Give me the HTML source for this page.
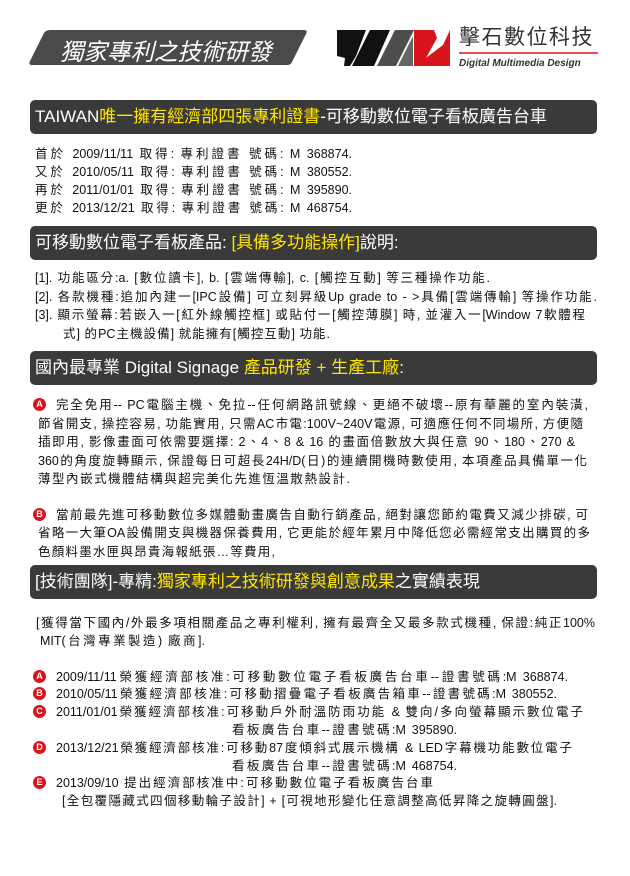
<!DOCTYPE html>
<html><head><meta charset="utf-8"><style>
body{margin:0;width:630px;height:876px;background:#fff;position:relative;overflow:hidden;font-family:"Liberation Sans","Noto Sans CJK TC",sans-serif;color:#111}
.a{position:absolute;white-space:nowrap}
.t{font-size:12.5px;line-height:14px;text-align:justify;text-align-last:justify;text-justify:inter-character;white-space:nowrap}
.bar{position:absolute;left:30px;width:567px;height:34px;background:#3a3a3a;border-radius:5px;color:#fff;font-size:17px;line-height:34px;padding-left:5px;box-sizing:border-box;white-space:nowrap}
.y{color:#ffe600}
.c{position:absolute;width:13px;height:13px;border-radius:50%;background:#d8141c;color:#fff;font-size:9px;line-height:13px;text-align:center;font-weight:bold}
</style></head><body>
<svg class="a" style="left:0;top:0" width="630" height="80">
<path d="M50,30 L304,30 Q308,30 306,34 L292,62 Q291,65 287,65 L32,65 Q28,65 30,61 L44,33 Q46,30 50,30Z" fill="#4a4a4a"/>
<polygon points="337,30 366,30 356,56 350,66 344,66 345,58 337,56" fill="#111"/>
<polygon points="370,30 390,30 374,66 352,66" fill="#111"/>
<polygon points="395,30 414,30 396,66 377,66" fill="#4d4d4d"/>
<polygon points="398,66 413,36 413,66" fill="#666"/>
<polygon points="414,30 434,30 437,38 426,58 443,45 450,30 450,66 414,66" fill="#d8141c"/>
<line x1="459" y1="53" x2="598" y2="53" stroke="#d8141c" stroke-width="1.5"/>
</svg>
<div class="a" style="left:60px;top:37px;font-size:23.5px;color:#fff;font-style:italic;line-height:30px">獨家專利之技術研發</div>
<div class="a" style="left:459px;top:25px;font-size:21px;color:#333;line-height:25px;letter-spacing:1.5px">擊石數位科技</div>
<div class="a" style="left:459px;top:58px;font-size:10px;color:#333;font-style:italic;font-weight:bold;line-height:12px">Digital Multimedia Design</div>

<div class="bar" style="top:100px">TAIWAN<span class="y">唯一擁有經濟部四張專利證書</span>-可移動數位電子看板廣告台車</div>
<div class="a t" style="left:35px;top:147px;width:317px">首於 2009/11/11 取得: 專利證書 號碼: M 368874.</div>
<div class="a t" style="left:35px;top:165px;width:317px">又於 2010/05/11 取得: 專利證書 號碼: M 380552.</div>
<div class="a t" style="left:35px;top:183px;width:317px">再於 2011/01/01 取得: 專利證書 號碼: M 395890.</div>
<div class="a t" style="left:35px;top:201px;width:317px">更於 2013/12/21 取得: 專利證書 號碼: M 468754.</div>

<div class="bar" style="top:226px">可移動數位電子看板產品: <span class="y">[具備多功能操作]</span>說明:</div>
<div class="a t" style="left:35px;top:271px;width:455px">[1]. 功能區分:a. [數位讀卡], b. [雲端傳輸], c. [觸控互動] 等三種操作功能.</div>
<div class="a t" style="left:35px;top:290px;width:562px">[2]. 各款機種:追加內建一[IPC設備] 可立刻昇級Up grade to - >具備[雲端傳輸] 等操作功能.</div>
<div class="a t" style="left:35px;top:308px;width:550px">[3]. 顯示螢幕:若嵌入一[紅外線觸控框] 或貼付一[觸控薄膜] 時, 並灌入一[Window 7軟體程</div>
<div class="a t" style="left:63px;top:327px;width:267px">式] 的PC主機設備] 就能擁有[觸控互動] 功能.</div>

<div class="bar" style="top:351px">國內最專業 Digital Signage <span class="y">產品研發 + 生產工廠</span>:</div>
<span class="c" style="left:33px;top:398px">A</span>
<div class="a t" style="left:56px;top:398px;width:532px">完全免用-- PC電腦主機、免拉--任何網路訊號線、更絕不破壞--原有華麗的室內裝潢,</div>
<div class="a t" style="left:38px;top:417px;width:545px">節省開支, 操控容易, 功能實用, 只需AC市電:100V~240V電源, 可適應任何不同場所, 方便隨</div>
<div class="a t" style="left:38px;top:435px;width:537px">插即用, 影像畫面可依需要選擇: 2、4、8 &amp; 16 的畫面倍數放大與任意 90、180、270 &amp;</div>
<div class="a t" style="left:38px;top:454px;width:549px">360的角度旋轉顯示, 保證每日可超長24H/D(日)的連續開機時數使用, 本項產品具備單一化</div>
<div class="a t" style="left:38px;top:472px;width:312px">薄型內嵌式機體結構與超完美化先進恆溫散熱設計.</div>
<span class="c" style="left:33px;top:508px">B</span>
<div class="a t" style="left:56px;top:508px;width:532px">當前最先進可移動數位多媒體動畫廣告自動行銷產品, 絕對讓您節約電費又減少排碳, 可</div>
<div class="a t" style="left:38px;top:526px;width:552px">省略一大筆OA設備開支與機器保養費用, 它更能於經年累月中降低您必需經常支出購買的多</div>
<div class="a t" style="left:38px;top:545px;width:237px">色顏料墨水匣與昂貴海報紙張…等費用,</div>

<div class="bar" style="top:565px">[技術團隊]-專精:<span class="y">獨家專利之技術研發與創意成果</span>之實績表現</div>
<div class="a t" style="left:36px;top:616px;width:559px">[獲得當下國內/外最多項相關產品之專利權利, 擁有最齊全又最多款式機種, 保證:純正100%</div>
<div class="a t" style="left:40px;top:634px;width:165px">MIT(台灣專業製造) 廠商].</div>
<span class="c" style="left:33px;top:670px">A</span>
<div class="a t" style="left:56px;top:670px;width:512px">2009/11/11榮獲經濟部核准:可移動數位電子看板廣告台車--證書號碼:M 368874.</div>
<span class="c" style="left:33px;top:687px">B</span>
<div class="a t" style="left:56px;top:687px;width:501px">2010/05/11榮獲經濟部核准:可移動摺疊電子看板廣告箱車--證書號碼:M 380552.</div>
<span class="c" style="left:33px;top:705px">C</span>
<div class="a t" style="left:56px;top:705px;width:527px">2011/01/01榮獲經濟部核准:可移動戶外耐溫防雨功能 &amp; 雙向/多向螢幕顯示數位電子</div>
<div class="a t" style="left:232px;top:723px;width:225px">看板廣告台車--證書號碼:M 395890.</div>
<span class="c" style="left:33px;top:741px">D</span>
<div class="a t" style="left:56px;top:741px;width:516px">2013/12/21榮獲經濟部核准:可移動87度傾斜式展示機構 &amp; LED字幕機功能數位電子</div>
<div class="a t" style="left:232px;top:759px;width:225px">看板廣告台車--證書號碼:M 468754.</div>
<span class="c" style="left:33px;top:776px">E</span>
<div class="a t" style="left:56px;top:776px;width:377px">2013/09/10 提出經濟部核准中:可移動數位電子看板廣告台車</div>
<div class="a t" style="left:62px;top:794px;width:495px">[全包覆隱藏式四個移動輪子設計] + [可視地形變化任意調整高低昇降之旋轉圓盤].</div>
</body></html>
